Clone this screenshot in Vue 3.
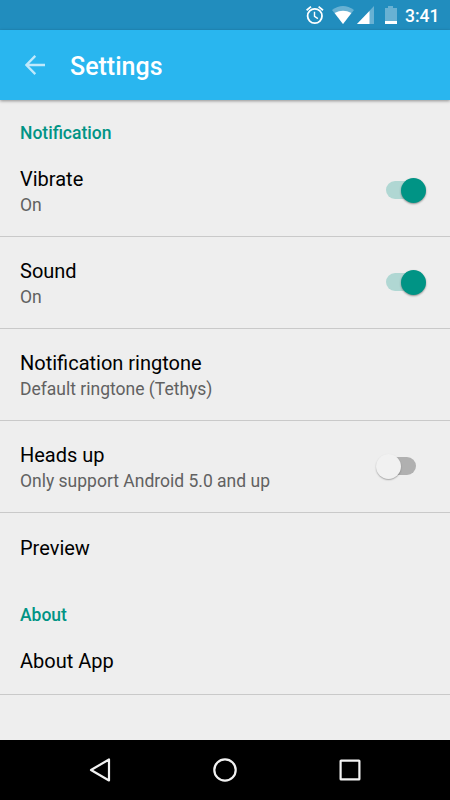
<script setup>
import { reactive } from 'vue'

const sections = reactive([
  {
    title: 'Notification',
    items: [
      { title: 'Vibrate', summary: 'On', toggle: true, on: true },
      { title: 'Sound', summary: 'On', toggle: true, on: true },
      { title: 'Notification ringtone', summary: 'Default ringtone (Tethys)' },
      { title: 'Heads up', summary: 'Only support Android 5.0 and up', toggle: true, on: false },
      { title: 'Preview', last: true }
    ]
  },
  { title: 'About', items: [{ title: 'About App' }] }
])
</script>

<template>
  <div class="screen">
    <div class="status">
      <svg class="status-icons" width="110" height="30" viewBox="0 0 110 30">
        <g fill="none" stroke="#fff" stroke-width="1.8">
          <circle cx="24.8" cy="16" r="7.2" />
          <path d="M24.5 11.8v4.6l3.4 2.3" stroke-width="1.4" />
          <path d="M16.6 10.2l4.4-3.6M33 10.2l-4.4-3.6" />
        </g>
        <path d="M42 10Q53 2 64 10L53 24Z" fill="#fff" opacity=".32" />
        <path d="M44.6 13Q53 8.7 61.4 13L53 24Z" fill="#fff" />
        <path d="M84 6V24H67Z" fill="#fff" opacity=".32" />
        <path d="M79.5 11V24H67Z" fill="#fff" />
        <path d="M95 8h3V6h5v2h4v13H95Z" fill="#fff" opacity=".32" />
        <path d="M95 21h12v3H95Z" fill="#fff" />
      </svg>
      <span class="clock">3:41</span>
    </div>
    <header class="toolbar">
      <svg class="back" width="20" height="20" viewBox="0 0 20 20">
        <path d="M20 10H1.5M10.3 .9L1.4 10l8.9 9.1" fill="none" stroke="#bfe9fc" stroke-width="2.3" />
      </svg>
      <h1>Settings</h1>
    </header>
    <main>
      <section v-for="s in sections" :key="s.title">
        <h2>{{ s.title }}</h2>
        <div v-for="i in s.items" :key="i.title" class="row" :class="{ single: !i.summary, last: i.last }">
          <div class="text">
            <div class="title">{{ i.title }}</div>
            <div v-if="i.summary" class="summary">{{ i.summary }}</div>
          </div>
          <div v-if="i.toggle" class="switch" :class="{ on: i.on }" @click="i.on = !i.on">
            <div class="thumb"></div>
          </div>
        </div>
      </section>
    </main>
    <nav>
      <svg width="450" height="60" viewBox="0 0 450 60" fill="none" stroke="#f2f2f2" stroke-width="2.2" stroke-linejoin="round">
        <path d="M109 19.5V40.5L91 30Z" />
        <circle cx="225" cy="30" r="10.7" />
        <rect x="340.6" y="20.6" width="18.8" height="18.8" rx=".5" />
      </svg>
    </nav>
  </div>
</template>

<style>
body {
  margin: 0;
}
</style>

<style scoped>
.screen {
  width: 450px;
  height: 800px;
  display: flex;
  flex-direction: column;
  background: #eee;
  font-family: Roboto, sans-serif;
  overflow: hidden;
}
.status {
  height: 30px;
  flex: none;
  display: flex;
  justify-content: flex-end;
  align-items: center;
  padding-right: 10px;
  background: #218dbe;
}
.status-icons {
  margin-right: 5px;
}
.clock {
  width: 35px;
  font-size: 17.5px;
  font-weight: 500;
  line-height: 30px;
  color: #fff;
  white-space: nowrap;
  padding-top: 2px;
}
.toolbar {
  height: 70px;
  flex: none;
  display: flex;
  align-items: center;
  padding-left: 25px;
  background: #29b6ef;
  box-shadow: 0 1px 3px rgba(0, 0, 0, 0.4);
}
h1 {
  margin: 4px 0 0 25px;
  font-size: 25px;
  font-weight: 500;
  line-height: 30px;
  color: #fff;
}
main {
  flex: 1;
}
h2 {
  margin: 0;
  height: 24px;
  padding: 21px 20px 0;
  font-size: 17.5px;
  font-weight: 500;
  line-height: 24px;
  color: #009485;
}
section + section h2 {
  height: 23px;
  padding-top: 22px;
}
.row {
  box-sizing: border-box;
  height: 92px;
  display: flex;
  align-items: flex-start;
  justify-content: space-between;
  padding: 22px 24px 0 20px;
  border-bottom: 1px solid #c9c9c9;
}
.row.single {
  height: 69px;
  padding-top: 23px;
}
.row.last {
  height: 68px;
  border-bottom: 0;
}
.title {
  font-size: 20px;
  line-height: 24px;
  color: #000;
}
.summary {
  margin-top: 2px;
  font-size: 17.5px;
  line-height: 24px;
  color: #616161;
}
.switch {
  display: flex;
  align-items: center;
  width: 30px;
  height: 18px;
  margin: 14px 10px 0 0;
  border-radius: 9px;
  background: #b0b0b0;
}
.switch.on {
  background: #b0d7d3;
}
.thumb {
  flex: none;
  width: 25px;
  height: 25px;
  margin-left: -10px;
  border-radius: 50%;
  background: #f1f1f1;
  box-shadow: 0 1px 1.5px rgba(0, 0, 0, 0.3);
}
.on .thumb {
  margin-left: 14.5px;
  background: #009485;
  box-shadow: 0 1px 2px rgba(0, 0, 0, 0.4);
}
nav {
  height: 60px;
  flex: none;
  background: #000;
}
nav svg {
  display: block;
}
</style>
